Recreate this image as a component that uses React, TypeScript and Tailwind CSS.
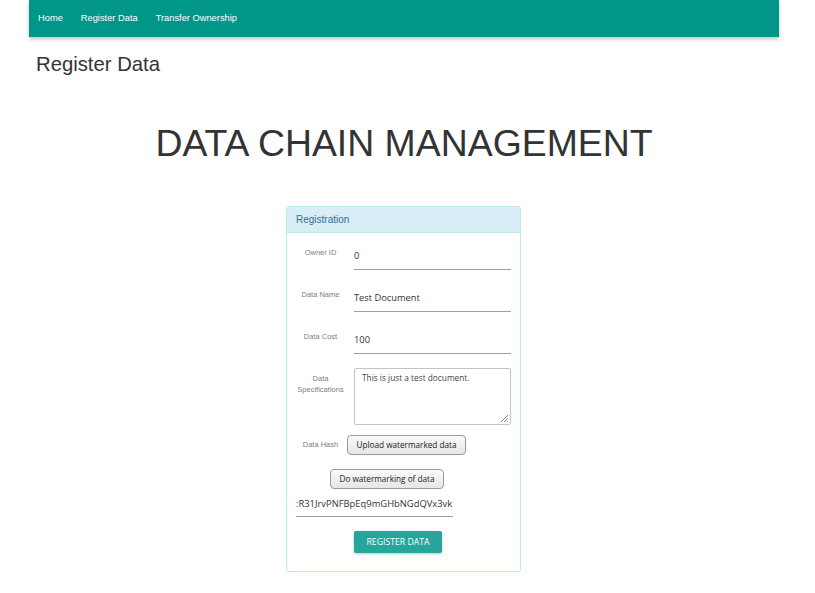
import React from "react";

const fields = [
  { label: "Owner ID", value: "0" },
  { label: "Data Name", value: "Test Document" },
  { label: "Data Cost", value: "100" },
];

const App = () => {
  return (
    <div className="min-h-screen bg-white font-['Liberation_Sans',sans-serif]">
      <div className="ml-[29px] w-[750px]">
        {/* navbar */}
        <nav className="h-[37px] bg-[#009688] shadow-[0_2px_4px_rgba(0,0,0,0.25)] flex items-center pl-[9px] gap-[18px] text-[9.3px] text-white">
          <span>Home</span>
          <span>Register Data</span>
          <span>Transfer Ownership</span>
        </nav>

        <h3 className="ml-[7px] mt-[14px] text-[20.3px] leading-[26px] text-[#333]">Register Data</h3>

        <h1 className="mt-[46px] text-center text-[37.4px] leading-[40px] text-[#333]">DATA CHAIN MANAGEMENT</h1>

        {/* registration card */}
        <div className="ml-[257px] mt-[43px] w-[235px] rounded-[3px] border border-[#bce8f1] bg-white">
          <div className="h-[26px] bg-[#d9edf7] border-b border-[#bce8f1] pl-[9px] flex items-center text-[10px] text-[#31708f]">
            Registration
          </div>
          <div className="px-[9px] pt-[12px] pb-[18px] font-['Open_Sans',sans-serif]">
            {fields.map((f) => (
              <div key={f.label} className="flex mb-[17px]">
                <div className="w-[49px] pt-[2px] text-center text-[7.5px] text-[#808080] font-['Liberation_Sans',sans-serif]">
                  {f.label}
                </div>
                <div className="ml-[9px] w-[157px] h-[25px] border-b border-[#9e9e9e] pt-[4px] text-[9.3px] text-[#333]">
                  {f.value}
                </div>
              </div>
            ))}
            <div className="flex -mt-[3px]">
              <div className="w-[49px] pt-[5px] text-center text-[7.5px] leading-[11px] text-[#808080] font-['Liberation_Sans',sans-serif]">
                Data
                <br />
                Specifications
              </div>
              <div className="ml-[9px] relative w-[157px] h-[57px] rounded-[2px] border border-[#c4c4c4] px-[7px] py-[3px] text-[8.3px] text-[#444]">
                This is just a test document.
                <svg className="absolute right-[1px] bottom-[1px]" width="9" height="9" viewBox="0 0 9 9">
                  <path d="M8 1L1 8M8 4L4 8M8 7L7 8" stroke="#888" strokeWidth="1" />
                </svg>
              </div>
            </div>
            <div className="flex items-center mt-[10px]">
              <div className="w-[49px] text-center text-[7.5px] text-[#808080] font-['Liberation_Sans',sans-serif]">
                Data Hash
              </div>
              <button className="ml-[2px] h-[20px] w-[119px] rounded-[4px] border border-[#999] bg-gradient-to-b from-[#fafafa] to-[#e6e6e6] text-[8.2px] text-[#222]">
                Upload watermarked data
              </button>
            </div>
            <button className="ml-[34px] mt-[14px] h-[20px] w-[114px] rounded-[4px] border border-[#999] bg-gradient-to-b from-[#fafafa] to-[#e6e6e6] text-[8.2px] text-[#222]">
              Do watermarking of data
            </button>
            <div className="mt-[8px] w-[157px] h-[20px] border-b border-[#9e9e9e] overflow-hidden whitespace-nowrap text-[9.4px] text-[#333]">
              :R31JrvPNFBpEq9mGHbNGdQVx3vk
            </div>
            <button className="ml-[58px] mt-[14px] h-[22px] w-[88px] rounded-[2px] bg-[#26a69a] pt-[1px] text-[8.7px] text-white shadow-[0_1px_3px_rgba(0,0,0,0.25)]">
              REGISTER DATA
            </button>
          </div>
        </div>
      </div>
    </div>
  );
};

export default App;
